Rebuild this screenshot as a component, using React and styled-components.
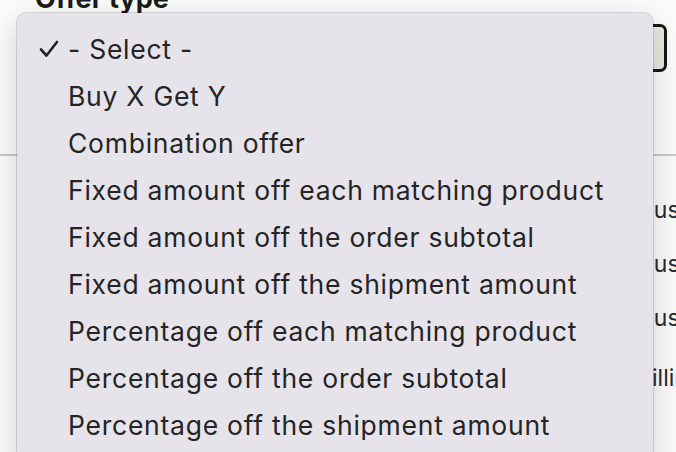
import React from 'react'
import styled, { createGlobalStyle } from 'styled-components'

const GlobalStyle = createGlobalStyle`
  html, body {
    margin: 0;
    padding: 0;
    width: 676px;
    height: 452px;
    overflow: hidden;
    background: #fbfbfb;
  }
  body {
    font-family: Inter, 'Noto Sans', sans-serif;
    color: #222;
  }
`

const Page = styled.div`
  position: relative;
  width: 676px;
  height: 452px;
  overflow: hidden;
`

const Form = styled.div`
  display: flex;
  flex-direction: column;
  padding: 0 9px 0 35px;
`

const Label = styled.label`
  display: block;
  font-size: 27px;
  font-weight: 700;
  line-height: 27px;
  margin-top: -15px;
  color: #1b1b1b;
`

const Required = styled.span`
  color: #f0a4a4;
  font-weight: 400;
  margin-left: 10px;
`

const SelectBox = styled.div`
  margin-top: 12px;
  height: 48px;
  box-sizing: border-box;
  border: 3px solid #161616;
  border-radius: 7px;
  background: #e9e9e3;
`

const Divider = styled.hr`
  border: none;
  border-top: 2px solid #c9c9c9;
  margin: 82px -9px 0 -35px;
`

const OptionList = styled.ul`
  list-style: none;
  margin: 42px 0 0;
  padding: 0 0 0 602px;
  display: flex;
  flex-direction: column;
  gap: 30px;
`

const Option = styled.li`
  font-size: 23px;
  line-height: 24px;
  color: #2a2a2a;
  white-space: nowrap;
  margin-top: ${(p) => (p.$extra ? '6px' : '0')};
`

const Menu = styled.ul`
  position: absolute;
  left: 17px;
  top: 13px;
  width: 636px;
  height: 452px;
  box-sizing: border-box;
  margin: 0;
  padding: 13px 0 0;
  list-style: none;
  background: #e6e3ea;
  border-radius: 9px;
  box-shadow: 0 0 0 1px rgba(0, 0, 0, 0.12), 0 10px 32px rgba(0, 0, 0, 0.18);
`

const MenuItem = styled.li`
  display: flex;
  align-items: center;
  height: 46.9px;
  font-size: 26.5px;
  letter-spacing: 0.75px;
  color: #242424;
  white-space: nowrap;
`

const Check = styled.span`
  width: 51px;
  display: flex;
  justify-content: flex-end;
  padding-right: 9px;
  box-sizing: border-box;
`

const items = [
  '- Select -',
  'Buy X Get Y',
  'Combination offer',
  'Fixed amount off each matching product',
  'Fixed amount off the order subtotal',
  'Fixed amount off the shipment amount',
  'Percentage off each matching product',
  'Percentage off the order subtotal',
  'Percentage off the shipment amount',
]

export default function App() {
  return (
    <Page>
      <GlobalStyle />
      <Form>
        <Label>
          Offer type<Required>*</Required>
        </Label>
        <SelectBox />
        <Divider />
        <OptionList>
          <Option>Customer group</Option>
          <Option>Customer role</Option>
          <Option>Customer tag</Option>
          <Option $extra>Billing</Option>
        </OptionList>
      </Form>
      <Menu>
        {items.map((label, i) => (
          <MenuItem key={label}>
            <Check>
              {i === 0 && (
                <svg width="20" height="18" viewBox="0 0 20 18">
                  <path
                    d="M2 9.5 L7.5 15.5 L18 2"
                    fill="none"
                    stroke="#222"
                    strokeWidth="2.6"
                    strokeLinecap="round"
                    strokeLinejoin="round"
                  />
                </svg>
              )}
            </Check>
            {label}
          </MenuItem>
        ))}
      </Menu>
    </Page>
  )
}
